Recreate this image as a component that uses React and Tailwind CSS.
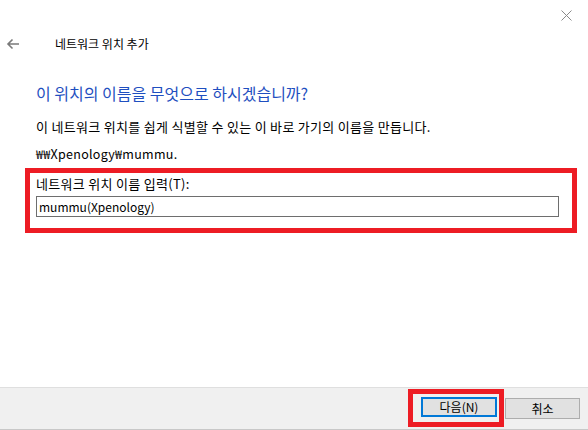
import React from 'react';

const font = { fontFamily: '"Noto Sans CJK KR", "Noto Sans", sans-serif' };

const App = () => {
  return (
    <div className="w-[588px] h-[430px] bg-white flex flex-col text-black overflow-hidden" style={font}>
      {/* title bar */}
      <div className="h-[30px] flex justify-end items-start">
        <div className="w-[46px] h-[30px] flex items-center justify-center pl-[2px]">
          <svg width="11" height="11" viewBox="0 0 11 11" fill="none" stroke="#8a8a8a" strokeWidth="1">
            <path d="M0.5 0.5 L10.5 10.5 M10.5 0.5 L0.5 10.5" />
          </svg>
        </div>
      </div>

      {/* back + wizard title */}
      <div className="h-[28px] flex items-center">
        <div className="w-[55px] pl-[6px] flex items-center">
          <svg width="14" height="12" viewBox="0 0 14 12" fill="none" stroke="#7a7a7a" strokeWidth="1.6">
            <path d="M13 6 H2 M6.5 1.5 L2 6 L6.5 10.5" />
          </svg>
        </div>
        <span className="text-[12px] leading-none">네트워크 위치 추가</span>
      </div>

      <div className="pl-[36px] pt-[25px]">
        <h1 className="text-[16px] leading-[20px] text-[#1f4fc0]">이 위치의 이름을 무엇으로 하시겠습니까?</h1>
        <p className="text-[13px] tracking-[0.3px] leading-[16px] mt-[16px]">이 네트워크 위치를 쉽게 식별할 수 있는 이 바로 가기의 이름을 만듭니다.</p>
        <p className="text-[12.5px] tracking-[0.3px] leading-[16px] mt-[11px]">₩₩Xpenology₩mummu.</p>
      </div>

      <div className="ml-[25px] mt-[6px] w-[552px] h-[65px] border-[5px] border-[#ed1c24] pl-[6px] pt-[3px]">
        <label className="block text-[13px] tracking-[0.3px] leading-[16px]">네트워크 위치 이름 입력(T):</label>
        <div className="mt-[4px] w-[523px] h-[21px] border border-[#6e6e6e] flex items-center px-[2px]">
          <span className="text-[12px] leading-none">mummu(Xpenology)</span>
        </div>
      </div>

      <div className="flex-1" />

      {/* footer */}
      <div className="h-[43px] bg-[#f0f0f0] border-t border-[#dfdfdf] border-b border-b-[#c8c8c8] flex items-start justify-end pr-[8px] pt-[1px]">
        <div className="w-[96px] h-[38px] border-[5px] border-[#ed1c24] pl-[8px] pr-[2px] pt-[3px]">
          <button className="w-[76px] h-[20px] bg-[#e1e1e1] border-2 border-[#0078d7] text-[12px] leading-none flex items-center justify-center">
            다음(N)
          </button>
        </div>
        <button className="ml-[1px] mt-[9px] w-[75px] h-[21px] bg-[#e1e1e1] border border-[#adadad] text-[12px] leading-none flex items-center justify-center">
          취소
        </button>
      </div>
    </div>
  );
};

export default App;
